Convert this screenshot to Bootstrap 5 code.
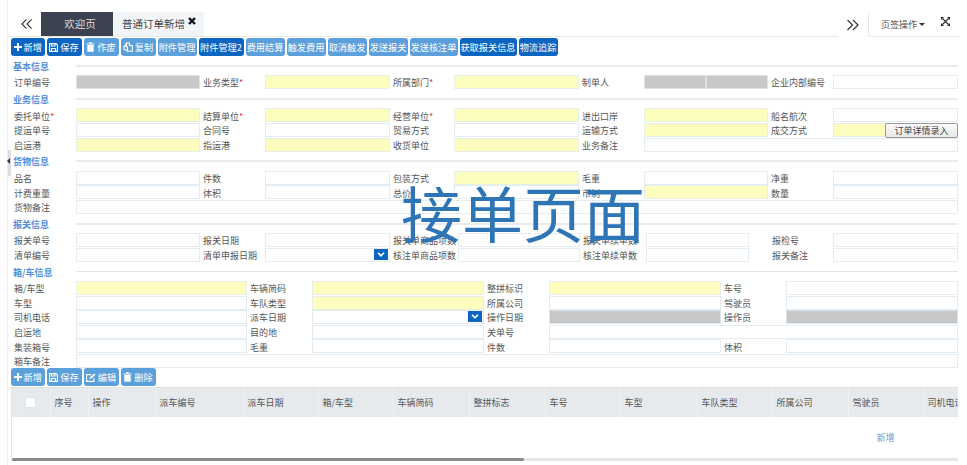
<!DOCTYPE html>
<html lang="zh-CN">
<head>
<meta charset="utf-8">
<title>普通订单新增</title>
<link href="https://cdn.jsdelivr.net/npm/bootstrap@5.3.0/dist/css/bootstrap.min.css" rel="stylesheet">
<style>
html,body{height:465px;overflow:hidden;background:#fff}
body{font-family:"Noto Sans CJK SC","Liberation Sans",sans-serif;font-size:9px;color:#555;line-height:1}
.shell{position:relative;margin-left:7px;padding-top:12px;height:465px;border-left:1px solid #ececec;width:953px}
.grip{position:absolute;left:0;top:150px;width:3px;height:26px;background:#ddd}
.grip i{position:absolute;left:-1px;top:8px;border:3px solid transparent;border-right-color:#333;border-left:0}
.tabbar{height:25px;border-bottom:1px solid #e9e9e9;align-items:stretch}
.tb-arrow{width:33px;padding-left:13px}
.tb-arrow svg,.tb-right svg{display:block}
.tab-dark{width:72px;background:#3c4250;color:#ddd;font-size:10.5px;padding-left:6px}
.tab-on{width:91px;background:#f2f5f7;color:#444;font-size:10.5px;padding-left:9px}
.tab-on svg{margin-left:3px;margin-top:-6px}
.tb-space{flex:1}
.tb-next{width:30px;background:#fff;margin-bottom:-1px}
.tb-right{width:92px;border-left:1px solid #e9e9e9;font-size:9px;color:#555;padding-left:12px}
.tb-right .caret{border:3px solid transparent;border-top-color:#333;border-bottom:0;margin-left:2px;margin-right:16px}
.tb-right svg{margin-top:-5px}
.tools{padding-left:3px;height:18px;margin-top:1px;gap:2px}
.tools2{margin-top:-.4px}
.tb-btn{height:18px;padding:0 1px;border-radius:3px;border:0;font-size:9.2px;line-height:18px;font-weight:400;white-space:nowrap;color:#fff;display:flex;align-items:center;justify-content:center}
.tb-btn svg{margin-right:2px;flex:none}
.tb-deep,.tb-deep:hover{background:#0b65c1;color:#fff}
.tb-soft,.tb-soft:hover{background:#5b9fdb;color:#fff}
.w34{width:33.5px}.w35{width:35px}.w39{width:39px}.w45{width:45px}.w48{width:48px}.w57{width:57px}
.sect{height:18.6px;padding-left:5px;width:950px;align-items:center}
.sect b{width:63px;flex:none;color:#4b8fdd;font-size:9px;font-weight:700;padding-top:1px}
.sect u{flex:1;height:2px;background:#eaeaea;display:block}
.sect u.thin{height:1px;background:#e3e3e3}
.sect.first{margin-top:.6px}
.fgrid{display:grid;grid-auto-rows:14.6px;padding-left:3px;width:950px}
.g5{grid-template-columns:65px 124px 65px 125px 64px 125px 65px 124px 65px 125px}
.g5b{grid-template-columns:65px 124px 65px 125px 68px 122px 66px 103px 84px 125px}
.g4{grid-template-columns:65px 171px 65px 172px 65px 172px 65px 172px}
.flb{padding-left:3px;padding-top:1px;display:flex;align-items:center;white-space:nowrap;overflow:visible;font-size:9px;color:#555}
.flb em{color:#e33;font-style:normal}
.flb.far{padding-left:23px}
.fin{display:block;width:100%;height:14px;min-height:0;padding:0 2px;border:1px solid #e4ecf3;border-radius:0;background:#fff;font-size:9px;box-shadow:none}
.fin.yel{background:#fdfdbe;border-color:#e6efe8}
.fin.gry{background:#c8c8c8;border-color:#dbe3ea}
.sp3{grid-column:span 3}.sp7{grid-column:span 7}.sp9{grid-column:span 9}
.duo{display:flex;gap:0}
.cellrel{position:relative}
.dd{position:absolute;right:2px;top:1px;width:14px;height:11px;background:#0b65c1;display:flex;align-items:center;justify-content:center}
.order-btn{position:absolute;right:0;top:0;width:73px;height:15px;padding:0;font-size:9px;line-height:13px;color:#444;background:linear-gradient(#fafafa,#e8e8e8);border:1px solid #999;border-radius:2px}
.stamp{position:absolute;left:393px;top:181px;font-size:61px;line-height:61px;color:#2e75b6;white-space:nowrap;pointer-events:none}
.gridwrap{margin:1px 0 0 3px;width:947px;height:74px;overflow:hidden;position:relative;border-left:1px solid #e4e4e4}
.dtable{table-layout:fixed;width:988px;margin:0;font-size:9px;color:#555;--bs-table-bg:transparent}
.dtable th{height:29px;padding:0 0 0 4px;background:#e7eaed;font-weight:400;vertical-align:middle;border:0;border-right:1px solid #eef0f2;border-top:1px solid #e0e0e0;white-space:nowrap;color:#555;font-size:9px}
.dtable td{height:42px;padding:0;border:0;vertical-align:middle;text-align:center}
.dtable a{color:#6c9acb;text-decoration:none;font-size:9px}
.ck{width:11px;height:11px;margin:0 0 0 9px;border:1px solid #e2e2e2;border-radius:0;display:block;float:none}
.sbar{position:absolute;left:0;right:0;bottom:0;height:3.5px;background:#e6e6e6}
.sthumb{width:512px;height:100%;background:#8a8a8a;border-radius:2px}
</style>
</head>
<body>
<div class="shell">
  <div class="grip"><i></i></div>

  <div class="tabbar d-flex">
    <div class="tb-arrow d-flex align-items-center"><svg width="12" height="12" viewBox="0 0 13 12" fill="none" stroke="#333" stroke-width="1.2"><path d="M6 1 1 6l5 5M11.500 1l-5 5 5 5"/></svg></div>
    <div class="tab-dark d-flex align-items-center justify-content-center">欢迎页</div>
    <div class="tab-on d-flex align-items-center">普通订单新增<svg width="8" height="8" viewBox="0 0 8 8" fill="none" stroke="#111" stroke-width="2.4"><path d="m1 1 6 6M7 1 1 7"/></svg></div>
    <div class="tb-space"></div>
    <div class="tb-next d-flex align-items-center"><svg class="ms-2" width="13" height="12" viewBox="0 0 13 12" fill="none" stroke="#333" stroke-width="1.2"><path d="m1.500 1 5 5-5 5M7 1l5 5-5 5"/></svg></div>
    <div class="tb-right d-flex align-items-center">页签操作<span class="caret"></span>
      <svg width="9" height="9" viewBox="0 0 9 9"><path d="M1.500 1.500l6 6M7.500 1.500l-6 6" stroke="#333" stroke-width="1.200" fill="none"/><path d="M0 0h3L0 3zM9 0v3L6 0zM0 9V6l3 3zM9 9H6l3-3z" fill="#223"/></svg>
    </div>
  </div>

  <div class="tools d-flex">
    <button class="btn tb-btn tb-deep w34"><svg width="8" height="8" viewBox="0 0 8 8" fill="#fff"><path d="M3 0h2v3h3v2H5v3H3V5H0V3h3z"/></svg>新增</button>
    <button class="btn tb-btn tb-deep w35"><svg width="9" height="9" viewBox="0 0 9 9" fill="none" stroke="#fff" stroke-width="1.100"><path d="M.6.6h6.300l1.500 1.500v6.300H.6zM2.500.8v2.200h3.500V.8M2.500 8.200V5.500h4v2.700"/></svg>保存</button>
    <button class="btn tb-btn tb-soft w35"><svg width="9" height="10" viewBox="0 0 9 10" fill="#fff"><path d="M.5 1.500h8v1h-8zM3 .3h3v1H3zM1.300 3h6.400v6.700H1.300z"/></svg>作废</button>
    <button class="btn tb-btn tb-soft w35"><svg width="10" height="10" viewBox="0 0 10 10" fill="none" stroke="#fff" stroke-width="1.100"><path d="M3.500 1h3v2.500h2.800v5.800H4V7M1 4.500 3.500 1v3.500H1v3.200h3.500V4.500"/></svg>复制</button>
    <button class="btn tb-btn tb-soft w39">附件管理</button>
    <button class="btn tb-btn tb-deep w45">附件管理2</button>
    <button class="btn tb-btn tb-soft w39">费用结算</button>
    <button class="btn tb-btn tb-soft w39">触发费用</button>
    <button class="btn tb-btn tb-soft w39">取消触发</button>
    <button class="btn tb-btn tb-soft w39">发送报关</button>
    <button class="btn tb-btn tb-soft w48">发送核注单</button>
    <button class="btn tb-btn tb-deep w57">获取报关信息</button>
    <button class="btn tb-btn tb-deep w39">物流追踪</button>
  </div>

  <div class="sect first d-flex"><b>基本信息</b><u></u></div>
  <div class="fgrid g5">
    <div class="flb">订单编号</div><div><input class="form-control fin gry"></div>
    <div class="flb">业务类型<em>*</em></div><div><input class="form-control fin yel"></div>
    <div class="flb">所属部门<em>*</em></div><div><input class="form-control fin yel"></div>
    <div class="flb">制单人</div><div class="duo"><input class="form-control fin gry"><input class="form-control fin gry"></div>
    <div class="flb">企业内部编号</div><div><input class="form-control fin"></div>
  </div>

  <div class="sect d-flex"><b>业务信息</b><u></u></div>
  <div class="fgrid g5">
    <div class="flb">委托单位<em>*</em></div><div><input class="form-control fin yel"></div>
    <div class="flb">结算单位<em>*</em></div><div><input class="form-control fin yel"></div>
    <div class="flb">经营单位<em>*</em></div><div><input class="form-control fin yel"></div>
    <div class="flb">进出口岸</div><div><input class="form-control fin yel"></div>
    <div class="flb">船名航次</div><div><input class="form-control fin"></div>

    <div class="flb">提运单号</div><div><input class="form-control fin"></div>
    <div class="flb">合同号</div><div><input class="form-control fin"></div>
    <div class="flb">贸易方式</div><div><input class="form-control fin"></div>
    <div class="flb">运输方式</div><div><input class="form-control fin yel"></div>
    <div class="flb">成交方式</div><div class="cellrel"><input class="form-control fin yel"><button class="btn order-btn">订单详情录入</button></div>

    <div class="flb">启运港</div><div><input class="form-control fin yel"></div>
    <div class="flb">指运港</div><div><input class="form-control fin yel"></div>
    <div class="flb">收货单位</div><div><input class="form-control fin yel"></div>
    <div class="flb">业务备注</div><div class="sp3"><input class="form-control fin"></div>
  </div>

  <div class="sect d-flex"><b>货物信息</b><u></u></div>
  <div class="fgrid g5">
    <div class="flb">品名</div><div><input class="form-control fin"></div>
    <div class="flb">件数</div><div><input class="form-control fin"></div>
    <div class="flb">包装方式</div><div><input class="form-control fin yel"></div>
    <div class="flb">毛重</div><div><input class="form-control fin"></div>
    <div class="flb">净重</div><div><input class="form-control fin"></div>

    <div class="flb">计费重量</div><div><input class="form-control fin"></div>
    <div class="flb">体积</div><div><input class="form-control fin"></div>
    <div class="flb">总价</div><div><input class="form-control fin"></div>
    <div class="flb">币制</div><div><input class="form-control fin yel"></div>
    <div class="flb">数量</div><div><input class="form-control fin"></div>

    <div class="flb">货物备注</div><div class="sp9"><input class="form-control fin"></div>
  </div>

  <div class="sect d-flex"><b>报关信息</b><u></u></div>
  <div class="fgrid g5b">
    <div class="flb">报关单号</div><div><input class="form-control fin"></div>
    <div class="flb">报关日期</div><div><input class="form-control fin"></div>
    <div class="flb">报关单商品项数</div><div><input class="form-control fin"></div>
    <div class="flb">报关单续单数</div><div><input class="form-control fin"></div>
    <div class="flb far">报检号</div><div><input class="form-control fin"></div>

    <div class="flb">清单编号</div><div><input class="form-control fin"></div>
    <div class="flb">清单申报日期</div><div class="cellrel"><input class="form-control fin"><span class="dd"><svg width="8" height="5" viewBox="0 0 8 5" fill="none" stroke="#fff" stroke-width="1.600"><path d="m1 .8 3 3 3-3"/></svg></span></div>
    <div class="flb">核注单商品项数</div><div><input class="form-control fin"></div>
    <div class="flb">核注单续单数</div><div><input class="form-control fin"></div>
    <div class="flb far">报关备注</div><div><input class="form-control fin"></div>
  </div>

  <div class="sect d-flex"><b>箱/车信息</b><u class="thin"></u></div>
  <div class="fgrid g4">
    <div class="flb">箱/车型</div><div><input class="form-control fin yel"></div>
    <div class="flb">车辆简码</div><div><input class="form-control fin yel"></div>
    <div class="flb">整拼标识</div><div><input class="form-control fin yel"></div>
    <div class="flb">车号</div><div><input class="form-control fin"></div>

    <div class="flb">车型</div><div><input class="form-control fin"></div>
    <div class="flb">车队类型</div><div><input class="form-control fin yel"></div>
    <div class="flb">所属公司</div><div><input class="form-control fin"></div>
    <div class="flb">驾驶员</div><div><input class="form-control fin"></div>

    <div class="flb">司机电话</div><div><input class="form-control fin"></div>
    <div class="flb">派车日期</div><div class="cellrel"><input class="form-control fin"><span class="dd"><svg width="8" height="5" viewBox="0 0 8 5" fill="none" stroke="#fff" stroke-width="1.600"><path d="m1 .8 3 3 3-3"/></svg></span></div>
    <div class="flb">操作日期</div><div><input class="form-control fin gry"></div>
    <div class="flb">操作员</div><div><input class="form-control fin gry"></div>

    <div class="flb">启运地</div><div><input class="form-control fin"></div>
    <div class="flb">目的地</div><div><input class="form-control fin"></div>
    <div class="flb">关单号</div><div class="sp3"><input class="form-control fin"></div>

    <div class="flb">集装箱号</div><div><input class="form-control fin"></div>
    <div class="flb">毛重</div><div><input class="form-control fin"></div>
    <div class="flb">件数</div><div><input class="form-control fin"></div>
    <div class="flb">体积</div><div><input class="form-control fin"></div>

    <div class="flb">箱车备注</div><div class="sp7"><input class="form-control fin"></div>
  </div>

  <div class="tools tools2 d-flex">
    <button class="btn tb-btn tb-soft w34"><svg width="8" height="8" viewBox="0 0 8 8" fill="#fff"><path d="M3 0h2v3h3v2H5v3H3V5H0V3h3z"/></svg>新增</button>
    <button class="btn tb-btn tb-soft w35"><svg width="9" height="9" viewBox="0 0 9 9" fill="none" stroke="#fff" stroke-width="1.100"><path d="M.6.6h6.300l1.500 1.500v6.300H.6zM2.500.8v2.200h3.500V.8M2.500 8.200V5.500h4v2.700"/></svg>保存</button>
    <button class="btn tb-btn tb-soft w35"><svg width="10" height="9" viewBox="0 0 10 9" fill="none" stroke="#fff" stroke-width="1.100"><path d="M8 5v3.400H.6V1.600h4.600"/><path d="M3.500 6 4 4l4.500-3.500 1 1L5.500 5.500z" fill="#fff" stroke="none"/></svg>编辑</button>
    <button class="btn tb-btn tb-soft w35"><svg width="9" height="10" viewBox="0 0 9 10" fill="#fff"><path d="M.5 1.500h8v1h-8zM3 .3h3v1H3zM1.300 3h6.400v6.700H1.300z"/></svg>删除</button>
  </div>

  <div class="gridwrap">
    <table class="table dtable">
      <colgroup><col style="width:38px"><col style="width:38px"><col style="width:67px"><col style="width:88px"><col style="width:75px"><col style="width:75px"><col style="width:76px"><col style="width:76px"><col style="width:75px"><col style="width:77px"><col style="width:75px"><col style="width:76px"><col style="width:75px"><col style="width:77px"></colgroup>
      <thead><tr>
        <th><input class="form-check-input ck" type="checkbox"></th><th>序号</th><th>操作</th><th>派车编号</th><th>派车日期</th><th>箱/车型</th><th>车辆简码</th><th>整拼标志</th><th>车号</th><th>车型</th><th>车队类型</th><th>所属公司</th><th>驾驶员</th><th>司机电话</th>
      </tr></thead>
      <tbody><tr><td></td><td></td><td></td><td></td><td></td><td></td><td></td><td></td><td></td><td></td><td></td><td></td><td><a href="#">新增</a></td><td></td></tr></tbody>
    </table>
    <div class="sbar"><div class="sthumb"></div></div>
  </div>

  <div class="stamp">接单页面</div>
</div>
<script src="https://cdn.jsdelivr.net/npm/bootstrap@5.3.0/dist/js/bootstrap.bundle.min.js"></script>
</body>
</html>
